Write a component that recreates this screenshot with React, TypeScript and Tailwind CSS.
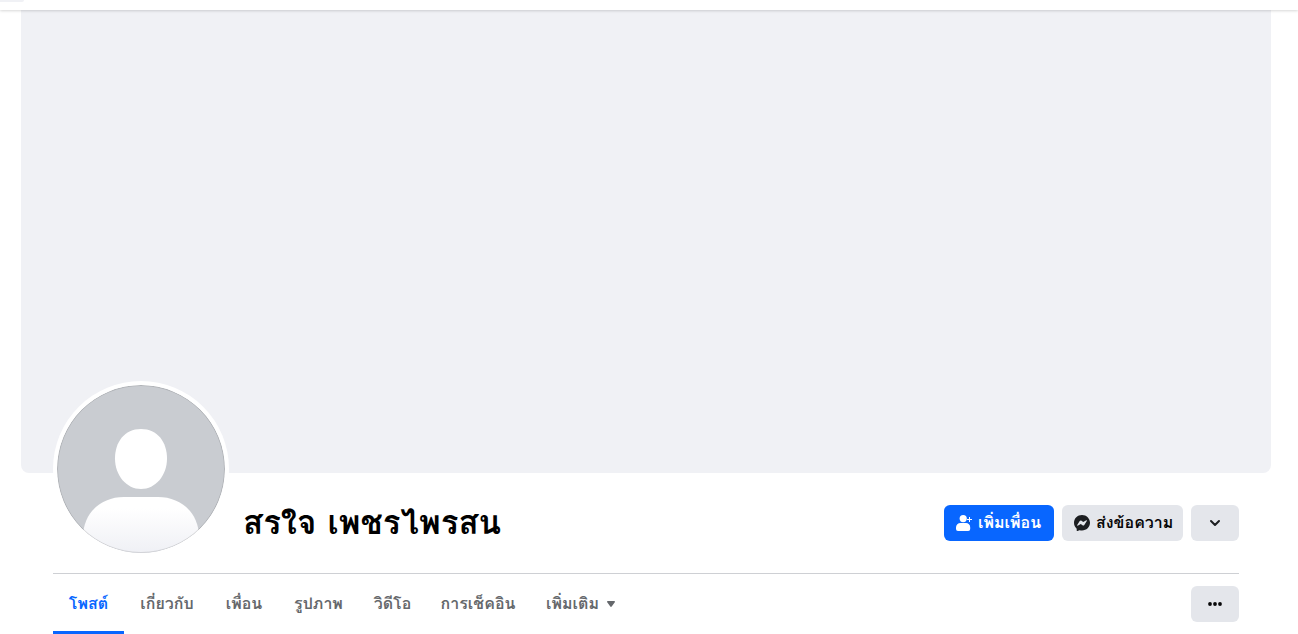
import { useState } from 'react';

const tabs = [
  { label: 'โพสต์', width: 'w-[71px]' },
  { label: 'เกี่ยวกับ', width: 'w-[86px]' },
  { label: 'เพื่อน', width: 'w-[68px]' },
  { label: 'รูปภาพ', width: 'w-[81px]' },
  { label: 'วิดีโอ', width: 'w-[67px]' },
  { label: 'การเช็คอิน', width: 'w-[104px]' },
];

function Avatar() {
  return (
    <svg viewBox="0 0 168 168" className="block size-full rounded-full" role="img" aria-label="รูปโปรไฟล์">
      <defs>
        <linearGradient id="body" x1="0" y1="112" x2="0" y2="168" gradientUnits="userSpaceOnUse">
          <stop offset="0.2" stopColor="#ffffff" />
          <stop offset="1" stopColor="#eff0f5" />
        </linearGradient>
        <clipPath id="circle">
          <circle cx="84" cy="84" r="84" />
        </clipPath>
      </defs>
      <g clipPath="url(#circle)">
        <rect width="168" height="168" fill="#c9ccd1" />
        <path d="M84 44c16.500 0 26 13 26 29.500C110 90.500 98.500 104 84 104S58 90.500 58 73.500C58 57 67.500 44 84 44z" fill="#fff" />
        <path d="M26 152c0-24 18-40 41-40h34c23 0 41 16 41 40v16H26z" fill="url(#body)" />
      </g>
      <circle cx="84" cy="84" r="83.500" fill="none" stroke="#000" strokeOpacity="0.12" />
    </svg>
  );
}

function AddFriendIcon() {
  return (
    <svg viewBox="0 0 16 16" className="size-4 shrink-0" aria-hidden="true">
      <circle cx="7.200" cy="3.600" r="3.600" fill="#fff" />
      <path d="M4.500 8h5.500a4.200 4.200 0 0 1 4.200 4.200v1.800a2 2 0 0 1-2 2H2a2 2 0 0 1-2-2v-1.500A4.500 4.500 0 0 1 4.500 8z" fill="#fff" />
      <path d="M13.500 2v5M11 4.500h5" stroke="#fff" fill="none" />
    </svg>
  );
}

function MessengerIcon() {
  return (
    <svg viewBox="0 0 16 16" className="size-4 shrink-0" aria-hidden="true">
      <path
        d="M8 0C3.500 0 0 3.300 0 7.800c0 2.300 1 4.300 2.500 5.700.2.100.2.300.2.400v1.500c0 .4.500.7.900.6l1.800-.8c.1-.1.300-.1.400 0 .7.200 1.400.3 2.200.3 4.500 0 8-3.300 8-7.700S12.500 0 8 0z"
        fill="#1c1e21"
      />
      <path d="M3.200 10l2.500-3.900c.4-.6 1.200-.8 1.800-.3l1.700 1.300 2.700-1.700c.7-.4 1.200.1.900.6l-2.500 3.900c-.4.600-1.200.8-1.800.3L6.800 8.900l-2.700 1.700c-.6.400-1.200-.1-.9-.6z" fill="#e4e6eb" />
    </svg>
  );
}

export default function App() {
  const [active, setActive] = useState(0);

  return (
    <div className="bg-white font-['Loma','Liberation_Sans',sans-serif] text-[#080809]">
      <header className="relative h-2.5 bg-white shadow-[0_1px_3px_rgba(0,0,0,0.16)]">
        <div className="h-0.5 w-6 rounded-br-full bg-[#f0f1f5]" />
      </header>

      <main className="pr-1.5">
        <div className="mx-auto max-w-[1250px]">
          <div className="h-[463px] rounded-b-lg bg-[#f0f1f5]" />

          <div className="px-8">
            <div className="-mt-[92px] flex items-end gap-3.5 border-b border-[#ced0d4] pb-4">
              <div className="relative size-44 shrink-0 rounded-full bg-white p-1">
                <Avatar />
              </div>
              <div className="flex grow items-center justify-between pb-4">
                <h1 className="text-[33px] leading-9 font-bold text-black">สรใจ เพชรไพรสน</h1>
                <div className="flex gap-2 text-base leading-5 font-semibold">
                  <button className="flex h-9 w-[110px] items-center gap-1.5 rounded-md bg-[#0866ff] pl-3 whitespace-nowrap text-white">
                    <AddFriendIcon />
                    เพิ่มเพื่อน
                  </button>
                  <button className="flex h-9 w-[121px] items-center gap-1.5 rounded-md bg-[#e4e6eb] pl-3 whitespace-nowrap">
                    <MessengerIcon />
                    ส่งข้อความ
                  </button>
                  <button aria-label="ตัวเลือก" className="flex h-9 w-12 items-center justify-center rounded-md bg-[#e4e6eb]">
                    <svg viewBox="0 0 16 16" className="size-4" aria-hidden="true">
                      <path d="M4 6l4 4 4-4" fill="none" stroke="#1c1e21" strokeWidth="2" strokeLinecap="round" strokeLinejoin="round" />
                    </svg>
                  </button>
                </div>
              </div>
            </div>

            <div className="flex items-center justify-between">
              <nav className="flex text-base leading-5 font-semibold whitespace-nowrap text-[#65686c]">
                {tabs.map((tab, i) => (
                  <button
                    key={tab.label}
                    onClick={() => setActive(i)}
                    className={`h-15 border-y-3 border-t-transparent ${tab.width} ${
                      i === active ? 'border-b-[#0866ff] text-[#0866ff]' : 'border-b-transparent'
                    }`}
                  >
                    {tab.label}
                  </button>
                ))}
                <button className="flex h-15 items-center gap-2 px-4">
                  เพิ่มเติม
                  <svg viewBox="0 0 8 6" className="h-1.5 w-2" aria-hidden="true">
                    <path d="M.8 0h6.400c.7 0 1 .8.600 1.300L4.700 5.500a.9.900 0 0 1-1.400 0L.2 1.300C-.2.800.1 0 .8 0z" fill="#65686c" />
                  </svg>
                </button>
              </nav>
              <button aria-label="เพิ่มเติม" className="flex h-9 w-12 items-center justify-center rounded-md bg-[#e4e6eb]">
                <svg viewBox="0 0 16 16" className="size-4" aria-hidden="true">
                  <circle cx="3" cy="8" r="1.900" fill="#080809" />
                  <circle cx="8" cy="8" r="1.900" fill="#080809" />
                  <circle cx="13" cy="8" r="1.900" fill="#080809" />
                </svg>
              </button>
            </div>
          </div>
        </div>
      </main>
    </div>
  );
}
